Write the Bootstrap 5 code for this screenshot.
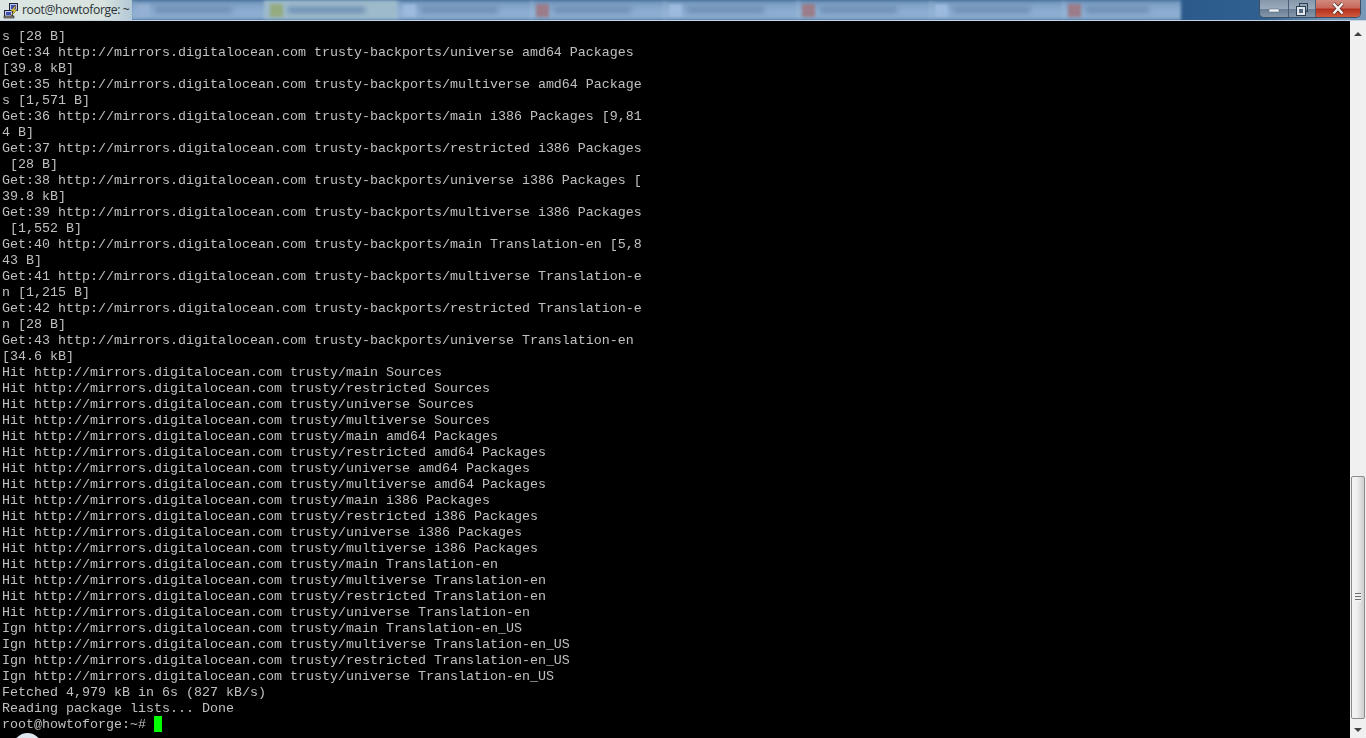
<!DOCTYPE html>
<html lang="en">
<head>
<meta charset="utf-8">
<title>root@howtoforge: ~</title>
<link href="https://cdn.jsdelivr.net/npm/bootstrap@5.3.0/dist/css/bootstrap.min.css" rel="stylesheet">
<style>
html,body{height:738px;overflow:hidden;background:#000}
.win-shell{height:738px;position:relative;overflow:hidden}
.title-strip{height:21px;background:#2f6090;border-bottom:1px solid #c4d3e6;flex:none;position:relative;overflow:hidden}
.title-main{width:132px;flex:none;background:linear-gradient(90deg,#dbe5e1 0,#d8e3df 78%,#b4c8d6 100%);font:12.2px/20px "Open Sans","Noto Sans",sans-serif;color:#2a3236;white-space:nowrap;padding-left:3px;gap:2px;letter-spacing:-.03em;position:relative;z-index:1}
.tabs-blur{width:1050px;flex:none;background:linear-gradient(180deg,#5f83aa 0,#7fa1c6 22%,#8eafd2 65%,#86a7ca 100%);filter:blur(1.5px);margin:0 -1px}
.blur-tab{flex:0 0 133px;padding:0 6px;gap:5px;min-width:0;background:linear-gradient(90deg,rgba(170,195,222,.35) 0,rgba(170,195,222,0) 5%)}
.blur-tab.last-tab{flex:1 1 0}
.blur-tab.is-green{background:#9dbacb}
.tab-ico{width:13px;height:13px;flex:none;background:#93b0d2}
.tab-ico.red{background:#9c7c88}
.tab-ico.grn{background:#95ab80}
.tab-ico.pale{background:#9cbadd}
.tab-txt{height:6px;flex:1;background:#6d8db3;filter:blur(2px);margin-right:26px}
.desk-rest{flex:1;background:linear-gradient(90deg,#2c5b8b 0,#2f6090 45%,#6f93b5 78%,#7898b8 100%)}
.win-btns{position:absolute;top:0;right:5px;height:18px;border:1px solid #3d4f66;border-top:0;border-radius:0 0 5px 5px;overflow:hidden;z-index:2}
.wb{height:17px;display:flex;align-items:center;justify-content:center;border-right:1px solid #4c5f78}
.wb-min{width:29px;background:linear-gradient(180deg,#8597ab 0,#9aabbd 50%,#6b7f95 55%,#8597aa 100%)}
.wb-max{width:27px;background:linear-gradient(180deg,#8597ab 0,#9aabbd 50%,#6b7f95 55%,#8597aa 100%)}
.wb-close{width:44px;border-right:0;background:linear-gradient(180deg,#d18a7e 0,#c9695c 45%,#b5301d 55%,#cf5a3f 100%)}
.term-row{flex:1;min-height:0}
.term-out{flex:1;margin:0;padding:8px 0 0 2px;font:13.33px/16px "Liberation Mono",monospace;color:#c0c0c0;background:#000;overflow:hidden;white-space:pre;filter:blur(.3px)}
.cursor-box{display:inline-block;width:8px;height:16px;background:#00ff00;vertical-align:-4px;margin-top:-1px}
.scroll-rail{width:16px;flex:none;background:#f0f0f0;position:relative}
.scroll-thumb{position:absolute;left:1px;right:1px;top:455px;height:243px;border:1px solid #8b8b8b;border-radius:2px;background:linear-gradient(90deg,#f4f4f4 0,#f0f0f0 40%,#d6d6d6 85%,#cfcfcf 100%)}
.grip{position:absolute;left:3px;right:3px;top:50%;height:9px;margin-top:-5px;background:repeating-linear-gradient(180deg,#6e6e6e 0,#6e6e6e 1px,#f3f3f3 1px,#f3f3f3 3px)}
.arrow-up,.arrow-dn{position:absolute;left:4px;width:0;height:0;border-left:4px solid transparent;border-right:4px solid transparent}
.arrow-up{top:11px;border-bottom:4px solid #404040}
.arrow-dn{bottom:6px;border-top:4px solid #404040}
.desk-orb{position:absolute;left:13px;top:733px;width:29px;height:29px;border-radius:50%;background:#dfe7ee}
</style>
</head>
<body>
<div class="win-shell d-flex flex-column">
  <div class="title-strip d-flex">
    <div class="title-main d-flex align-items-center">
      <svg width="17" height="17" viewBox="0 0 17 17" aria-hidden="true">
        <rect x="6.500" y="1.500" width="8" height="7" fill="#b9c4ea" stroke="#22233a"/>
        <rect x="8" y="3" width="5" height="4" fill="#3f4fb0"/>
        <rect x="1.500" y="8.500" width="8" height="6" fill="#c6cde8" stroke="#22233a"/>
        <rect x="3" y="10" width="5" height="3" fill="#3f4fb0"/>
        <rect x="1" y="14" width="10" height="2" fill="#8e8a70" stroke="#22233a" stroke-width=".6"/>
        <path d="M12 4 8 9h3l-3 5 6-6h-3l2-4z" fill="#f2d43c" stroke="#6b5a10" stroke-width=".5"/>
      </svg>
      <span>root@howtoforge: ~</span>
    </div>
    <div class="tabs-blur d-flex">
      <div class="blur-tab d-flex align-items-center"><span class="tab-ico"></span><span class="tab-txt"></span></div>
      <div class="blur-tab is-green d-flex align-items-center"><span class="tab-ico grn"></span><span class="tab-txt"></span></div>
      <div class="blur-tab d-flex align-items-center"><span class="tab-ico pale"></span><span class="tab-txt"></span></div>
      <div class="blur-tab d-flex align-items-center"><span class="tab-ico red"></span><span class="tab-txt"></span></div>
      <div class="blur-tab d-flex align-items-center"><span class="tab-ico pale"></span><span class="tab-txt"></span></div>
      <div class="blur-tab d-flex align-items-center"><span class="tab-ico red"></span><span class="tab-txt"></span></div>
      <div class="blur-tab d-flex align-items-center"><span class="tab-ico pale"></span><span class="tab-txt"></span></div>
      <div class="blur-tab last-tab d-flex align-items-center"><span class="tab-ico red"></span><span class="tab-txt"></span></div>
    </div>
    <div class="desk-rest"></div>
    <div class="win-btns d-flex">
      <div class="wb wb-min"><svg width="14" height="14" viewBox="0 0 14 14" aria-hidden="true"><rect x="2" y="7" width="10" height="3" rx=".5" fill="#eef2f6" stroke="#45586e" stroke-width=".5"/></svg></div>
      <div class="wb wb-max"><svg width="14" height="14" viewBox="0 0 14 14" aria-hidden="true"><rect x="4.500" y="1.500" width="8" height="8" fill="none" stroke="#2f3f52"/><rect x="1.500" y="4.500" width="9" height="9" fill="#dfe6ee" stroke="#2f3f52"/><rect x="4" y="7" width="4" height="4" fill="#54677d"/></svg></div>
      <div class="wb wb-close"><svg width="14" height="13" viewBox="0 0 14 13" aria-hidden="true"><path d="M2.500 1.500 11.500 11.500M11.500 1.500 2.500 11.500" stroke="#4b2019" stroke-width="3.800"/><path d="M2.500 1.500 11.500 11.500M11.500 1.500 2.500 11.500" stroke="#f7f2f0" stroke-width="2.600"/></svg></div>
    </div>
  </div>
  <div class="term-row d-flex">
<pre class="term-out">s [28 B]
Get:34 http://mirrors.digitalocean.com trusty-backports/universe amd64 Packages
[39.8 kB]
Get:35 http://mirrors.digitalocean.com trusty-backports/multiverse amd64 Package
s [1,571 B]
Get:36 http://mirrors.digitalocean.com trusty-backports/main i386 Packages [9,81
4 B]
Get:37 http://mirrors.digitalocean.com trusty-backports/restricted i386 Packages
 [28 B]
Get:38 http://mirrors.digitalocean.com trusty-backports/universe i386 Packages [
39.8 kB]
Get:39 http://mirrors.digitalocean.com trusty-backports/multiverse i386 Packages
 [1,552 B]
Get:40 http://mirrors.digitalocean.com trusty-backports/main Translation-en [5,8
43 B]
Get:41 http://mirrors.digitalocean.com trusty-backports/multiverse Translation-e
n [1,215 B]
Get:42 http://mirrors.digitalocean.com trusty-backports/restricted Translation-e
n [28 B]
Get:43 http://mirrors.digitalocean.com trusty-backports/universe Translation-en
[34.6 kB]
Hit http://mirrors.digitalocean.com trusty/main Sources
Hit http://mirrors.digitalocean.com trusty/restricted Sources
Hit http://mirrors.digitalocean.com trusty/universe Sources
Hit http://mirrors.digitalocean.com trusty/multiverse Sources
Hit http://mirrors.digitalocean.com trusty/main amd64 Packages
Hit http://mirrors.digitalocean.com trusty/restricted amd64 Packages
Hit http://mirrors.digitalocean.com trusty/universe amd64 Packages
Hit http://mirrors.digitalocean.com trusty/multiverse amd64 Packages
Hit http://mirrors.digitalocean.com trusty/main i386 Packages
Hit http://mirrors.digitalocean.com trusty/restricted i386 Packages
Hit http://mirrors.digitalocean.com trusty/universe i386 Packages
Hit http://mirrors.digitalocean.com trusty/multiverse i386 Packages
Hit http://mirrors.digitalocean.com trusty/main Translation-en
Hit http://mirrors.digitalocean.com trusty/multiverse Translation-en
Hit http://mirrors.digitalocean.com trusty/restricted Translation-en
Hit http://mirrors.digitalocean.com trusty/universe Translation-en
Ign http://mirrors.digitalocean.com trusty/main Translation-en_US
Ign http://mirrors.digitalocean.com trusty/multiverse Translation-en_US
Ign http://mirrors.digitalocean.com trusty/restricted Translation-en_US
Ign http://mirrors.digitalocean.com trusty/universe Translation-en_US
Fetched 4,979 kB in 6s (827 kB/s)
Reading package lists... Done
root@howtoforge:~# <span class="cursor-box"></span></pre>
    <div class="scroll-rail">
      <span class="arrow-up"></span>
      <div class="scroll-thumb"><span class="grip"></span></div>
      <span class="arrow-dn"></span>
    </div>
  </div>
  <div class="desk-orb"></div>
</div>
<script src="https://cdn.jsdelivr.net/npm/bootstrap@5.3.0/dist/js/bootstrap.bundle.min.js"></script>
</body>
</html>
